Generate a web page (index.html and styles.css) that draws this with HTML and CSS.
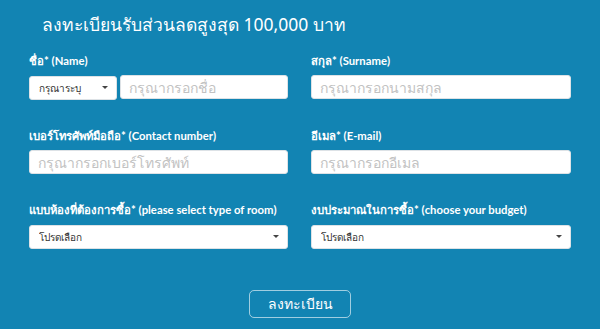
FILE: index.html
```html
<!DOCTYPE html>
<html lang="th">
<head>
<meta charset="UTF-8">
<meta name="viewport" content="width=device-width, initial-scale=1.0">
<title>ลงทะเบียน</title>
<link rel="stylesheet" href="styles.css">
</head>
<body>
<div class="register">
    <h2 class="title">ลงทะเบียนรับส่วนลดสูงสุด 100,000 บาท</h2>
    <form class="form">
        <div class="field">
            <label>ชื่อ* (Name)</label>
            <div class="name-row">
                <div class="select select--prefix">
                    <select>
                        <option>กรุณาระบุ</option>
                    </select>
                </div>
                <input type="text" placeholder="กรุณากรอกชื่อ">
            </div>
        </div>
        <div class="field">
            <label>สกุล* (Surname)</label>
            <input type="text" placeholder="กรุณากรอกนามสกุล">
        </div>
        <div class="field">
            <label>เบอร์โทรศัพท์มือถือ* (Contact number)</label>
            <input type="text" placeholder="กรุณากรอกเบอร์โทรศัพท์">
        </div>
        <div class="field">
            <label>อีเมล* (E-mail)</label>
            <input type="text" placeholder="กรุณากรอกอีเมล">
        </div>
        <div class="field">
            <label>แบบห้องที่ต้องการซื้อ* (please select type of room)</label>
            <div class="select">
                <select>
                    <option>โปรดเลือก</option>
                </select>
            </div>
        </div>
        <div class="field">
            <label>งบประมาณในการซื้อ* (choose your budget)</label>
            <div class="select">
                <select>
                    <option>โปรดเลือก</option>
                </select>
            </div>
        </div>
    </form>
    <div class="actions">
        <button type="button">ลงทะเบียน</button>
    </div>
</div>
</body>
</html>
```

FILE: styles.css
```css
body {
    margin: 0;
    padding: 0;
    font-family: "Noto Sans", "DejaVu Sans", sans-serif;
    background-color: #1284b3;
}
.register {
    height: 329px;
    box-sizing: border-box;
    padding: 10px 29px 0 29px;
    color: #fff;
}
.title {
    margin: 0 0 0 13px;
    font-size: 17.5px;
    font-weight: normal;
    line-height: 28px;
}
.form {
    display: grid;
    grid-template-columns: 259px 260px;
    column-gap: 23px;
    row-gap: 28px;
    margin-top: 15px;
}
.field label {
    display: block;
    font-family: Lato, "Noto Sans", sans-serif;
    font-size: 11.3px;
    font-weight: bold;
    line-height: 16px;
    white-space: nowrap;
    margin-bottom: 6px;
}
.name-row {
    display: flex;
    gap: 3px;
}
input[type="text"] {
    box-sizing: border-box;
    width: 100%;
    height: 24px;
    padding: 0 8px;
    border: 1px solid #dde2e6;
    border-radius: 3px;
    background-color: #fff;
    font-family: inherit;
    font-size: 14px;
    color: #333;
}
input::placeholder {
    color: #c2c2c2;
}
.select {
    position: relative;
    width: 100%;
}
.select--prefix {
    width: 88px;
    flex-shrink: 0;
}
.select select {
    -webkit-appearance: none;
    appearance: none;
    box-sizing: border-box;
    width: 100%;
    height: 24px;
    padding: 0 20px 0 9px;
    border: 1px solid #dde2e6;
    border-radius: 3px;
    background-color: #fff;
    font-family: inherit;
    font-size: 10px;
    color: #333;
}
.select::after {
    content: "";
    position: absolute;
    right: 9px;
    top: 11px;
    border-left: 3px solid transparent;
    border-right: 3px solid transparent;
    border-top: 3px solid #444;
    pointer-events: none;
}
.actions {
    display: flex;
    justify-content: center;
    margin-top: 41px;
}
button {
    width: 102px;
    height: 28px;
    border: 1px solid rgba(255, 255, 255, 0.6);
    border-radius: 5px;
    background-color: transparent;
    color: #fff;
    font-family: inherit;
    font-size: 14px;
    cursor: pointer;
}
```
